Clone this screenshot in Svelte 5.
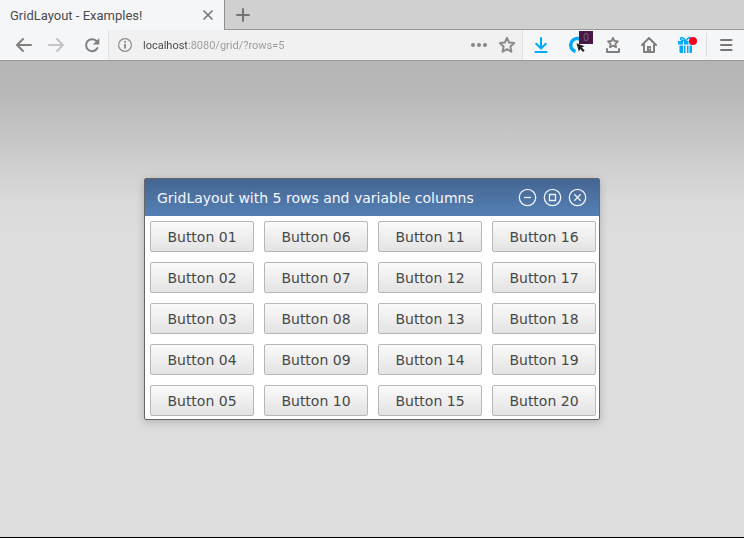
<script>
  const rows = 5;
  const labels = Array.from({ length: 20 }, (_, i) => `Button ${String(i + 1).padStart(2, '0')}`);
  let url = $state('localhost:8080/grid/?rows=5');
</script>

<div class="browser">
  <header>
    <div class="tabs">
      <div class="tab">
        <span>GridLayout - Examples!</span>
        <button class="icon close" aria-label="Close tab">
          <svg width="12" height="12" viewBox="0 0 12 12"><path d="M2 2l8 8M10 2l-8 8" stroke="#777" stroke-width="1.7" stroke-linecap="round" /></svg>
        </button>
      </div>
      <button class="icon add" aria-label="New tab">
        <svg width="16" height="16" viewBox="0 0 16 16"><path d="M8 2v12M2 8h12" stroke="#747474" stroke-width="2" stroke-linecap="round" /></svg>
      </button>
    </div>

    <div class="toolbar">
      <nav class="history">
        <button class="icon" aria-label="Back">
          <svg width="18" height="16" viewBox="0 0 18 16"><path d="M8 2L2 8l6 6M2 8h14" fill="none" stroke="#808080" stroke-width="2" stroke-linecap="round" stroke-linejoin="round" /></svg>
        </button>
        <button class="icon" aria-label="Forward">
          <svg width="18" height="16" viewBox="0 0 18 16"><path d="M10 2l6 6-6 6M16 8H2" fill="none" stroke="#c3c3c5" stroke-width="2" stroke-linecap="round" stroke-linejoin="round" /></svg>
        </button>
        <button class="icon reload" aria-label="Reload">
          <svg width="16" height="16" viewBox="0 0 16 16"><path d="M13.4 11A6 6 0 1 1 12.2 3.8L13 4.6" fill="none" stroke="#808080" stroke-width="2" stroke-linecap="round" /><path d="M15.3 1v6.5H8.8z" fill="#808080" /></svg>
        </button>
      </nav>

      <div class="address">
        <svg class="info" width="16" height="16" viewBox="0 0 16 16"><circle cx="8" cy="8" r="6.4" fill="none" stroke="#8c8c8c" stroke-width="1.2" /><path d="M8 7v4.5M8 4v1.8" stroke="#858585" stroke-width="1.8" /></svg>
        <input type="text" aria-label="Address" spellcheck="false" bind:value={url} />
        <button class="icon" aria-label="Page actions">
          <svg width="18" height="16" viewBox="0 0 18 16"><g fill="#858585"><circle cx="3" cy="8" r="2" /><circle cx="9" cy="8" r="2" /><circle cx="15" cy="8" r="2" /></g></svg>
        </button>
        <button class="icon star" aria-label="Bookmark">
          <svg width="18" height="18" viewBox="0 0 18 18"><path d="M9 1.8l2.1 4.7 5.1.6-3.8 3.5 1 5.1L9 13.2l-4.4 2.5 1-5.1L1.8 7.1l5.1-.6z" fill="none" stroke="#8b8b8b" stroke-width="2" stroke-linejoin="round" /></svg>
        </button>
      </div>

      <div class="tools">
        <button class="icon" aria-label="Downloads">
          <svg width="16" height="18" viewBox="0 0 16 18"><path d="M8 2v10M3.2 7.8L8 12.5l4.8-4.7M2.5 16h11" fill="none" stroke="#00aaf5" stroke-width="2" stroke-linecap="round" stroke-linejoin="round" /></svg>
        </button>
        <button class="icon blocker" aria-label="Blocker">
          <svg width="18" height="18" viewBox="0 0 18 18"><path d="M13.8 4.3A6.6 6.6 0 1 0 7.5 15.5" fill="none" stroke="#00aaf5" stroke-width="3.4" /><path d="M8.5 7.2l8 3-2.8 1.2 3 3-1.6 1.6-3-3-1.2 2.8z" fill="#222" /></svg>
          <span class="badge">0</span>
        </button>
        <button class="icon" aria-label="Bookmarks">
          <svg width="16" height="18" viewBox="0 0 16 18"><path d="M8 1.8l1.5 3.2 3.5.4-2.6 2.400.7 3.500L8 9.600l-3.100 1.700.7-3.500L3 5.400 6.500 5z" fill="none" stroke="#808080" stroke-width="1.800" stroke-linejoin="round" /><path d="M2 13v3h12v-3" fill="none" stroke="#808080" stroke-width="2" stroke-linejoin="round" stroke-linecap="round" /></svg>
        </button>
        <button class="icon" aria-label="Home">
          <svg width="18" height="18" viewBox="0 0 18 18"><path d="M2 9l7-7 7 7M4 8.500V16h10V8.500" fill="none" stroke="#808080" stroke-width="2" stroke-linecap="round" stroke-linejoin="round" /><path d="M7 15v-5h4v5z" fill="#808080" /><path d="M9.500 12v1" stroke="#f5f6f7" stroke-width="1" /></svg>
        </button>
        <button class="icon gift" aria-label="What's new">
          <svg width="20" height="18" viewBox="0 0 20 18"><g fill="#00aaf5"><path d="M1 5h5v3.500H1zM7 5h4.500v3.500H7zM12.500 5H16v3.500h-3.500zM2.500 9.500H6V17H3.500a1 1 0 0 1-1-1zM7 9.500h1.500V17H7zM10 9.500h1.500V17H10zM12.500 9.500h2.500V16a1 1 0 0 1-1 1h-1.500z" /></g><path d="M8.500 4.500C7 1.500 3.500.7 3.500 2.700S7 4.500 8.500 4.500zM9.500 4.500c1-3 4-3.800 4.500-2" fill="none" stroke="#00aaf5" stroke-width="1.500" /><circle cx="16" cy="5" r="4" fill="#fb0020" /></svg>
        </button>
        <button class="icon menu" aria-label="Menu">
          <svg width="14" height="16" viewBox="0 0 14 16"><path d="M2 3h10.500M2 8h10.500M2 13h10.500" stroke="#777" stroke-width="2" stroke-linecap="round" /></svg>
        </button>
      </div>
    </div>
  </header>

  <main>
    <section class="window">
      <div class="titlebar">
        <h1>GridLayout with 5 rows and variable columns</h1>
        <button class="icon" aria-label="Minimize">
          <svg width="19" height="19" viewBox="0 0 19 19"><circle cx="9.500" cy="9.500" r="8.200" /><path d="M6 9.500h7" /></svg>
        </button>
        <button class="icon" aria-label="Maximize">
          <svg width="19" height="19" viewBox="0 0 19 19"><circle cx="9.500" cy="9.500" r="8.200" /><path d="M6.500 6.500h6v6h-6z" /></svg>
        </button>
        <button class="icon" aria-label="Close">
          <svg width="19" height="19" viewBox="0 0 19 19"><circle cx="9.500" cy="9.500" r="8.200" /><path d="M6.300 6.300l6.400 6.400M12.700 6.300l-6.400 6.400" /></svg>
        </button>
      </div>
      <div class="grid" style="grid-template-rows: repeat({rows}, auto)">
        {#each labels as label}
          <button class="cell">{label}</button>
        {/each}
      </div>
    </section>
  </main>
</div>

<style>
  :global(body) {
    margin: 0;
  }
  .browser {
    box-sizing: border-box;
    min-height: 100vh;
    display: flex;
    flex-direction: column;
    border-bottom: 1px solid #000;
    font-family: Roboto, "Noto Sans", sans-serif;
  }
  .icon {
    display: flex;
    align-items: center;
    justify-content: center;
    flex: none;
    padding: 0;
    border: 0;
    background: none;
  }
  .tabs {
    display: flex;
    height: 30px;
    background: #d0d0d0;
  }
  .tab {
    box-sizing: border-box;
    width: 225px;
    display: flex;
    align-items: center;
    justify-content: space-between;
    padding: 0 10px;
    background: #f5f6f7;
    border-right: 1px solid #8e8e8e;
    color: #4c4c4c;
    font-size: 13px;
  }
  .add {
    flex: 1;
    justify-content: flex-start;
    padding-left: 10px;
    border-bottom: 1px solid #999;
  }
  .toolbar {
    display: flex;
    height: 30px;
    background: #f5f6f7;
    border-bottom: 1px solid #999;
  }
  .history {
    display: flex;
    align-items: center;
    gap: 14px;
    padding: 0 8px 0 15px;
  }
  .reload {
    margin-left: 5px;
  }
  .address {
    flex: 1;
    min-width: 0;
    display: flex;
    align-items: center;
    gap: 10px;
    padding: 0 6px 0 8px;
    background: #f1f1f1;
    border-left: 1px solid #e2e2e2;
    border-right: 1px solid #e2e2e2;
  }
  .info {
    flex: none;
  }
  input {
    flex: 1;
    min-width: 0;
    padding: 0;
    border: 0;
    outline: 0;
    font: 11px Roboto, "Noto Sans", sans-serif;
    color: transparent;
    background: linear-gradient(90deg, #444 44px, #999 44px);
    background-clip: text;
  }
  .tools {
    display: flex;
    align-items: center;
  }
  .tools .icon {
    width: 36px;
    height: 24px;
  }
  .blocker {
    position: relative;
  }
  .badge {
    position: absolute;
    top: -2px;
    right: 2px;
    width: 14px;
    height: 13px;
    background: #471747;
    color: #77707a;
    font-size: 10px;
    line-height: 13px;
    text-align: center;
  }
  .tools .gift {
    width: 39px;
  }
  .tools .menu {
    width: 38px;
    border-left: 1px solid #dcdcdd;
  }
  main {
    flex: 1;
    display: flex;
    align-items: center;
    justify-content: center;
    background: linear-gradient(#b5b5b5, #b9b9b9 36px, #dadada 140px, #ddd 170px);
  }
  .window {
    background: #fff;
    border: 1px solid #666;
    border-radius: 2px;
    box-shadow: 0 2px 8px rgba(0, 0, 0, 0.2);
    font-family: "DejaVu Sans", sans-serif;
    font-size: 14px;
  }
  .titlebar {
    display: flex;
    align-items: center;
    gap: 6px;
    height: 37px;
    padding: 0 12px;
    background: linear-gradient(#446592, #5580b5);
  }
  h1 {
    flex: 1;
    margin: 0;
    color: #f4f7fa;
    font-size: 14px;
    font-weight: 400;
    line-height: 20px;
  }
  .titlebar svg {
    fill: none;
    stroke: #edf2f7;
    stroke-width: 1.3;
  }
  .grid {
    display: grid;
    grid-auto-flow: column;
    grid-auto-columns: 104px;
    gap: 10px;
    padding: 5px 3px 3px 5px;
  }
  .cell {
    height: 31px;
    padding: 0;
    border: 1px solid #b7b7b7;
    border-radius: 2px;
    background: linear-gradient(#fafafa, #e3e3e3);
    color: #484848;
    font: 14px "DejaVu Sans", sans-serif;
  }
</style>
